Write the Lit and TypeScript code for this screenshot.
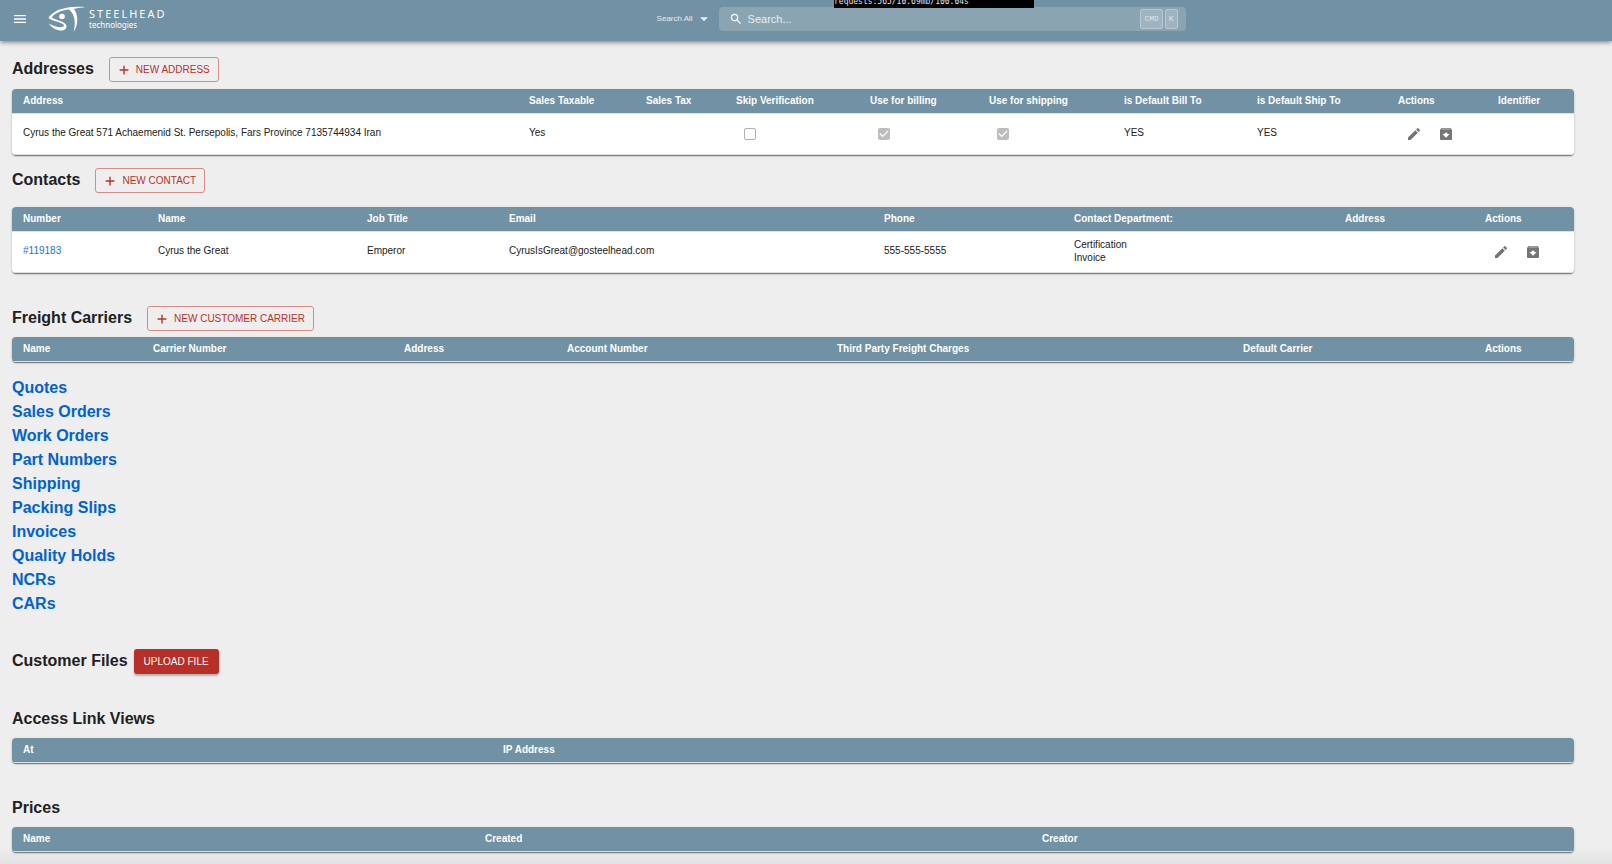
import { LitElement, html, css, svg, nothing, TemplateResult } from "lit";
import { customElement, property } from "lit/decorators.js";

const icon = (d: string) => html`<svg class="icon" viewBox="0 0 24 24" aria-hidden="true">${svg`<path d=${d}></path>`}</svg>`;

const ICONS = {
  menu: "M3 18h18v-2H3v2zm0-5h18v-2H3v2zm0-7v2h18V6H3z",
  search:
    "M15.5 14h-.79l-.28-.27C15.41 12.59 16 11.11 16 9.5 16 5.91 13.09 3 9.5 3S3 5.91 3 9.5 5.91 16 9.5 16c1.61 0 3.09-.59 4.23-1.57l.27.28v.79l5 4.99L20.49 19l-4.99-5zm-6 0C7.01 14 5 11.99 5 9.5S7.01 5 9.5 5 14 7.01 14 9.5 11.99 14 9.5 14z",
  arrow: "M6 9.500l6 6 6-6z",
  plus: "M19.500 13.200h-6.300v6.300h-2.400v-6.300H4.500v-2.400h6.300V4.500h2.400v6.300h6.300v2.400z",
  edit: "M3 17.25V21h3.75L17.81 9.94l-3.75-3.75L3 17.25zM20.71 7.04c.39-.39.39-1.02 0-1.41l-2.34-2.34a.9959.9959 0 0 0-1.41 0l-1.83 1.83 3.75 3.75 1.83-1.83z",
  archive:
    "M20.54 5.23l-1.39-1.68C18.88 3.21 18.47 3 18 3H6c-.47 0-.88.21-1.16.55L3.46 5.23C3.17 5.57 3 6.02 3 6.5V19c0 1.1.9 2 2 2h14c1.1 0 2-.9 2-2V6.5c0-.48-.17-.93-.46-1.27zM12 17.5L6.5 12H10v-2h4v2h3.5L12 17.5zM5.12 5l.81-1h12l.94 1H5.12z",
};

const shared = css`
  * {
    box-sizing: border-box;
  }
  .icon {
    display: block;
    width: 16px;
    height: 16px;
    fill: currentColor;
    flex: none;
  }
  button {
    font-family: inherit;
    margin: 0;
    cursor: pointer;
  }
`;

interface Column {
  label: string;
  span: number;
}

@customElement("data-table")
class DataTable extends LitElement {
  @property({ attribute: false }) columns: Column[] = [];
  @property({ attribute: false }) rows: (TemplateResult | string)[][] = [];

  static styles = [
    shared,
    css`
      :host {
        display: block;
        border-radius: 4px;
        overflow: hidden;
        background: #fff;
        box-shadow: 0 2px 1px -1px rgba(0, 0, 0, 0.3), 0 1px 1px rgba(0, 0, 0, 0.2),
          0 1px 3px rgba(0, 0, 0, 0.16);
      }
      table {
        width: 100%;
        table-layout: fixed;
        border-collapse: separate;
        border-spacing: 0;
      }
      th,
      td {
        padding: 0 0 0 11px;
        text-align: left;
        border-bottom: 1px solid #e0e0e0;
        white-space: nowrap;
        vertical-align: middle;
      }
      th {
        height: 25px;
        background: #7191a4;
        color: #fff;
        font-weight: 700;
      }
      td {
        height: 41px;
        padding-bottom: 2px;
      }
      .lines {
        line-height: 13px;
      }
      .link {
        color: #1976d2;
        text-decoration: none;
      }
      .actions {
        display: flex;
        gap: 16px;
        padding: 2px 0 0 8px;
      }
      .act {
        display: block;
        padding: 0;
        border: 0;
        background: none;
        color: #757575;
      }
      .check {
        display: block;
        appearance: none;
        width: 12px;
        height: 12px;
        margin: 2px 0 0 8px;
        border: 1px solid #b0b0b0;
        border-radius: 2px;
        background: #fff;
      }
      .check:checked {
        border: 0;
        background: #bdbdbd
          url("data:image/svg+xml,%3Csvg xmlns='http://www.w3.org/2000/svg' viewBox='3 3 18 18'%3E%3Cpath fill='%23fff' d='M10 17l-5-5 1.41-1.41L10 14.17l7.59-7.59L19 8z'/%3E%3C/svg%3E")
          center / 12px 12px no-repeat;
      }
    `,
  ];

  render() {
    const total = this.columns.reduce((sum, c) => sum + c.span, 0);
    return html`<table>
      <colgroup>
        ${this.columns.map((c) => html`<col style="width:${(c.span / total) * 100}%" />`)}
      </colgroup>
      <thead>
        <tr>
          ${this.columns.map((c) => html`<th scope="col">${c.label}</th>`)}
        </tr>
      </thead>
      ${this.rows.length
        ? html`<tbody>
            ${this.rows.map((r) => html`<tr>${r.map((cell) => html`<td>${cell}</td>`)}</tr>`)}
          </tbody>`
        : nothing}
    </table>`;
  }
}

const check = (label: string, on: boolean) =>
  html`<input class="check" type="checkbox" aria-label=${label} ?checked=${on} disabled />`;

const actions = html`<div class="actions">
  <button class="act" aria-label="Edit">${icon(ICONS.edit)}</button>
  <button class="act" aria-label="Archive">${icon(ICONS.archive)}</button>
</div>`;

const cols = (...pairs: [string, number][]): Column[] => pairs.map(([label, span]) => ({ label, span }));

const ADDRESS_COLS = cols(
  ["Address", 506],
  ["Sales Taxable", 117],
  ["Sales Tax", 90],
  ["Skip Verification", 134],
  ["Use for billing", 119],
  ["Use for shipping", 135],
  ["is Default Bill To", 133],
  ["is Default Ship To", 141],
  ["Actions", 100],
  ["Identifier", 87]
);
const ADDRESS_ROWS = [
  [
    "Cyrus the Great 571 Achaemenid St. Persepolis, Fars Province 7135744934 Iran",
    "Yes",
    "",
    check("Skip Verification", false),
    check("Use for billing", true),
    check("Use for shipping", true),
    "YES",
    "YES",
    actions,
    "",
  ],
];
const CONTACT_COLS = cols(
  ["Number", 135],
  ["Name", 209],
  ["Job Title", 142],
  ["Email", 375],
  ["Phone", 190],
  ["Contact Department:", 271],
  ["Address", 140],
  ["Actions", 100]
);
const CONTACT_ROWS = [
  [
    html`<a class="link" href="#119183">#119183</a>`,
    "Cyrus the Great",
    "Emperor",
    "CyrusIsGreat@gosteelhead.com",
    "555-555-5555",
    html`<div class="lines">Certification<br />Invoice</div>`,
    "",
    actions,
  ],
];
const CARRIER_COLS = cols(
  ["Name", 130],
  ["Carrier Number", 251],
  ["Address", 163],
  ["Account Number", 270],
  ["Third Party Freight Charges", 406],
  ["Default Carrier", 242],
  ["Actions", 100]
);
const VIEW_COLS = cols(["At", 480], ["IP Address", 1082]);
const PRICE_COLS = cols(["Name", 462], ["Created", 557], ["Creator", 543]);

const LINKS = [
  "Quotes",
  "Sales Orders",
  "Work Orders",
  "Part Numbers",
  "Shipping",
  "Packing Slips",
  "Invoices",
  "Quality Holds",
  "NCRs",
  "CARs",
];

@customElement("app-root")
class AppRoot extends LitElement {
  static styles = [
    shared,
    css`
      :host {
        display: block;
        height: 100vh;
        overflow: hidden;
        position: relative;
        background: #eee;
        color: #212121;
        font: 10px/14px "Liberation Sans", Arial, sans-serif;
      }
      .bar {
        display: grid;
        grid-template-columns: 14fr 529px 9fr;
        align-items: center;
        height: 41px;
        padding: 0 12px 3px;
        background: #7191a4;
        color: #fff;
        box-shadow: 0 2px 4px -1px rgba(0, 0, 0, 0.3), 0 2px 5px rgba(0, 0, 0, 0.2);
      }
      .brand {
        display: flex;
        align-items: center;
        gap: 20px;
      }
      .menu {
        padding: 0;
        border: 0;
        background: none;
        color: #fff;
      }
      .logo {
        display: flex;
        gap: 3px;
        align-items: center;
        color: #fff;
        text-decoration: none;
      }
      .mark {
        display: block;
        width: 38px;
        height: 27px;
      }
      .words {
        display: flex;
        flex-direction: column;
        font-family: "Noto Sans", sans-serif;
      }
      .name {
        font-size: 11px;
        line-height: 12px;
        letter-spacing: 2px;
      }
      .sub {
        font-size: 8px;
        line-height: 10px;
      }
      .find {
        display: flex;
        align-items: center;
        justify-content: space-between;
      }
      .scope {
        display: flex;
        align-items: center;
        gap: 2px;
      }
      .scope select {
        appearance: none;
        border: 0;
        padding: 0;
        background: none;
        color: #e6edf1;
        font: 8px/12px "Liberation Sans", Arial, sans-serif;
      }
      .scope .icon {
        color: #e6edf1;
      }
      .box {
        display: flex;
        align-items: center;
        width: 467px;
        height: 24px;
        padding: 0 8px 0 10px;
        border-radius: 4px;
        background: #8aa4b2;
      }
      .box .icon {
        width: 14px;
        height: 14px;
      }
      .box input {
        flex: 1;
        min-width: 0;
        margin-left: 5px;
        padding: 0;
        border: 0;
        outline: 0;
        background: none;
        color: #fff;
        font: 11px/16px "Liberation Sans", Arial, sans-serif;
      }
      .box input::placeholder {
        color: #e9eff2;
      }
      .keys {
        display: flex;
        gap: 2px;
      }
      kbd {
        padding: 0 3px;
        border: 1px solid #b9c9d2;
        border-radius: 2px;
        background: #9fb4c0;
        color: #dbe4e9;
        font: 8px/18px "Liberation Mono", monospace;
      }
      .stats {
        position: absolute;
        top: 0;
        left: 834px;
        width: 200px;
        height: 8px;
        overflow: hidden;
        background: #000;
        color: #e6e6e6;
        font: 8px/10px "DejaVu Sans Mono", monospace;
        display: flex;
        align-items: flex-end;
      }
      .stats span {
        margin-bottom: 1px;
      }
      main {
        padding: 16px 38px 0 12px;
      }
      .head {
        display: flex;
        gap: 15px;
        height: 25px;
      }
      .head.tight {
        gap: 6px;
      }
      h2 {
        margin: 0;
        font-size: 16px;
        line-height: 24px;
        font-weight: 700;
      }
      .add,
      .upload {
        display: flex;
        align-items: center;
        height: 25px;
        padding: 0 10px;
        border-radius: 3px;
        font-size: 10px;
        line-height: 16px;
        text-transform: uppercase;
      }
      .add {
        gap: 5px;
        padding: 0 8px 0 7px;
        border: 1px solid #d98b86;
        background: none;
        color: #b93229;
      }
      .add .icon {
        width: 14px;
        height: 14px;
      }
      .upload {
        border: 0;
        background: #b72f27;
        color: #fff;
        box-shadow: 0 2px 2px rgba(0, 0, 0, 0.25);
      }
      .addresses {
        margin-top: 7px;
      }
      .contacts {
        margin-top: 13px;
      }
      .sec {
        margin-top: 14px;
      }
      .carriers {
        margin-top: 33px;
      }
      .carriers-table {
        margin-top: 6px;
      }
      .links {
        margin: 14px 0 0;
        padding: 0;
        list-style: none;
        font-size: 16px;
        line-height: 24px;
        font-weight: 700;
      }
      .links a {
        color: #0062d6;
        text-decoration: none;
      }
      .files {
        margin-top: 33px;
      }
      .views {
        margin-top: 33px;
      }
      .list {
        margin-top: 6px;
      }
      .fade {
        position: absolute;
        left: 0;
        right: 0;
        bottom: 0;
        height: 16px;
        background: linear-gradient(to bottom, rgba(0, 0, 0, 0), rgba(0, 0, 0, 0.05));
        pointer-events: none;
      }
    `,
  ];

  private addButton(label: string) {
    return html`<button class="add">${icon(ICONS.plus)}<span>${label}</span></button>`;
  }

  render() {
    return html`
      <header class="bar">
        <div class="brand">
          <button class="menu" aria-label="Menu">${icon(ICONS.menu)}</button>
          <a class="logo" href="#home">
            <svg class="mark" viewBox="0 0 38 27" fill="#fff" aria-hidden="true">
              <path
                d="M37.500 1C27 .5 14 1 6 6.500C1.500 9.500 0 11.500 1 12.500C4 15 12 15.500 15.500 18.500C18 21.500 10 23 1 17.500C5 24.500 17 27.500 18.500 21C19.500 16 9 14.500 4 11.800C4.500 8 14 4 21 3.500C27 8 28 18 25.500 26C31 18 30 8 26 3C30 2 34 1.500 37.500 1Z"
              />
              <circle cx="14" cy="10.500" r="2.800" />
            </svg>
            <span class="words"><span class="name">STEELHEAD</span><span class="sub">technologies</span></span>
          </a>
        </div>
        <div class="find">
          <label class="scope">
            <select aria-label="Search scope">
              <option>Search All</option>
            </select>
            ${icon(ICONS.arrow)}
          </label>
          <label class="box">
            ${icon(ICONS.search)}
            <input type="text" placeholder="Search..." aria-label="Search" />
            <span class="keys"><kbd>CMD</kbd><kbd>K</kbd></span>
          </label>
        </div>
      </header>
      <div class="stats"><span>requests:565/10.69mb/100.04s</span></div>
      <main>
        <div class="head">
          <h2>Addresses</h2>
          ${this.addButton("New Address")}
        </div>
        <data-table class="addresses" .columns=${ADDRESS_COLS} .rows=${ADDRESS_ROWS}></data-table>

        <div class="head contacts">
          <h2>Contacts</h2>
          ${this.addButton("New Contact")}
        </div>
        <data-table class="sec" .columns=${CONTACT_COLS} .rows=${CONTACT_ROWS}></data-table>

        <div class="head carriers">
          <h2>Freight Carriers</h2>
          ${this.addButton("New Customer Carrier")}
        </div>
        <data-table class="carriers-table" .columns=${CARRIER_COLS}></data-table>

        <ul class="links">
          ${LINKS.map((l) => html`<li><a href="#${l}">${l}</a></li>`)}
        </ul>

        <div class="head tight files">
          <h2>Customer Files</h2>
          <button class="upload">Upload File</button>
        </div>

        <div class="head views"><h2>Access Link Views</h2></div>
        <data-table class="list" .columns=${VIEW_COLS}></data-table>

        <div class="head views"><h2>Prices</h2></div>
        <data-table class="list" .columns=${PRICE_COLS}></data-table>
      </main>
      <div class="fade"></div>
    `;
  }
}
